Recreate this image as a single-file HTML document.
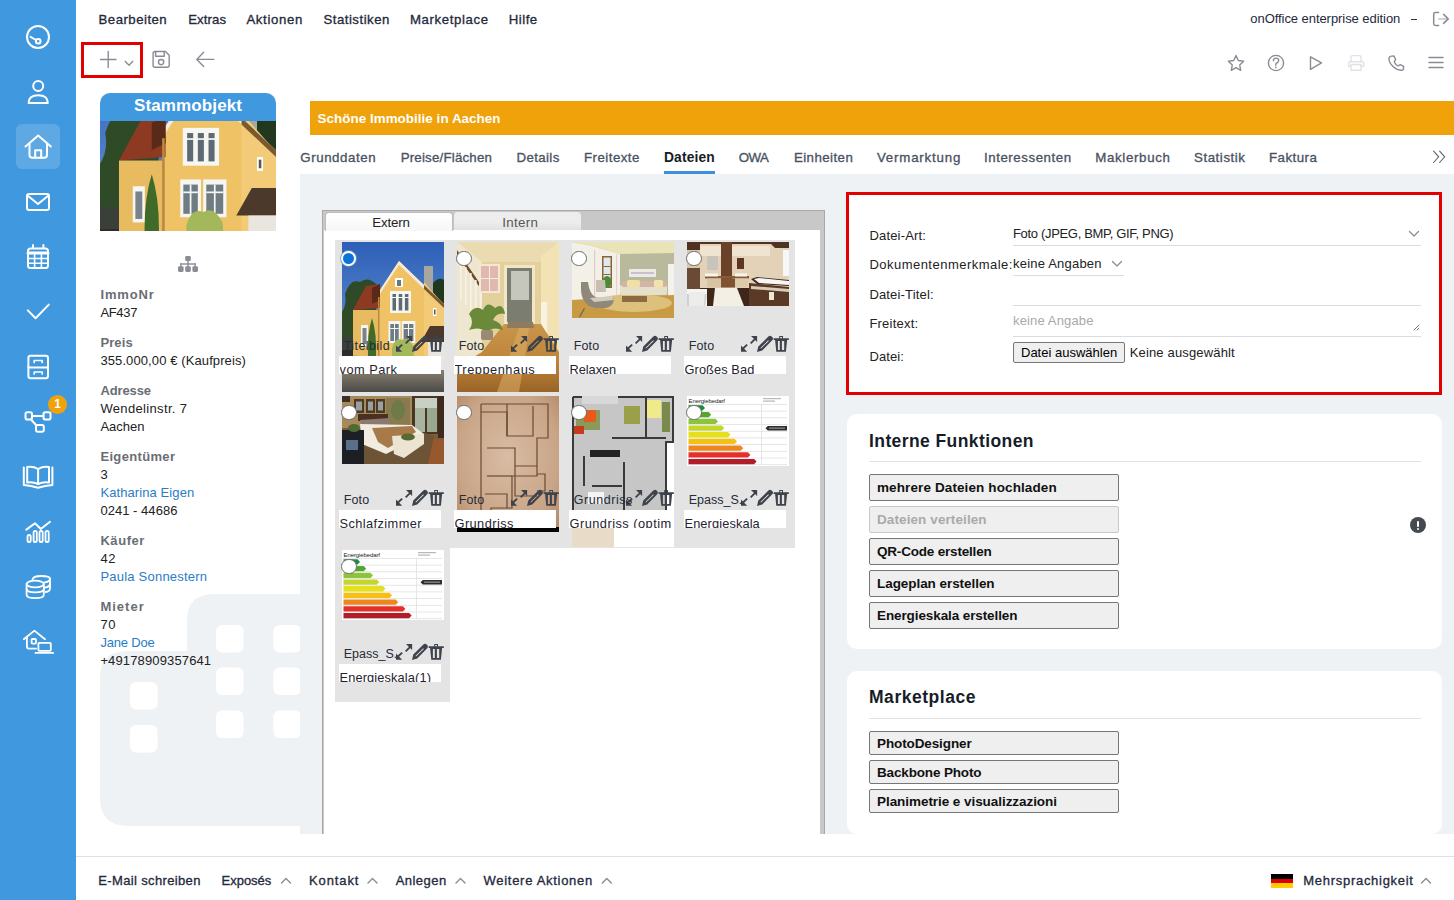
<!DOCTYPE html>
<html><head><meta charset="utf-8">
<style>
*{box-sizing:border-box;margin:0;padding:0}
html,body{width:1454px;height:900px;overflow:hidden;background:#fff;font-family:"Liberation Sans",sans-serif;color:#1f2330}
.a{position:absolute}
.t{position:absolute;white-space:nowrap;line-height:1}
</style></head>
<body>
<svg width="0" height="0" style="position:absolute">
<defs>
<linearGradient id="sky" x1="0" y1="0" x2="0" y2="1"><stop offset="0" stop-color="#2d5fb6"/><stop offset="0.6" stop-color="#5b8ad0"/><stop offset="1" stop-color="#8fb2dc"/></linearGradient>
<linearGradient id="road" x1="0" y1="0" x2="0" y2="1"><stop offset="0" stop-color="#8a8070"/><stop offset="1" stop-color="#4a4a48"/></linearGradient>
<g id="house">
<rect x="0" y="0" width="102" height="150" fill="url(#sky)"/>
<path d="M3 52 Q8 36 18 40 Q26 34 34 42 L34 110 L0 110 L0 70 Q5 62 3 52 Z" fill="#2f4a26"/><path d="M0 95 H12 V132 H0 Z" fill="#3a3f3a"/>
<path d="M90 42 Q97 34 102 38 L102 70 L90 70 Z" fill="#22381e"/>
<rect x="82" y="24" width="9" height="34" fill="#a9a6a0"/>
<path d="M36 51 L57 19 L102 63 L102 132 L36 132 Z" fill="#f0c266"/>
<path d="M82 40 L102 63 L102 132 L82 132 Z" fill="#f3cb78"/>
<path d="M57 19 L102 62 L102 66 L57 23 L36 55 L36 51 Z" fill="#f4ead6"/>
<path d="M82 43 L102 62 L102 66 L82 47 Z" fill="#7a5a2a"/>
<path d="M11 68 L24 44 L38 42 L38 66 Z" fill="#8e3a22"/>
<path d="M30 46 L38 42 L38 58 L30 62 Z" fill="#5a2a18"/>
<rect x="11" y="68" width="26" height="64" fill="#e9bb60"/>
<rect x="36" y="55" width="1.5" height="77" fill="#b88a40"/>
<rect x="53" y="36" width="8" height="9" fill="#fff"/><rect x="55" y="38" width="4" height="6" fill="#6a7680"/>
<rect x="48" y="49" width="21" height="22" fill="#f6f6f2"/>
<rect x="50.5" y="52" width="3.5" height="16.5" fill="#5d6a74"/><rect x="56.7" y="52" width="3.5" height="16.5" fill="#5d6a74"/><rect x="62.9" y="52" width="3.5" height="16.5" fill="#5d6a74"/>
<rect x="50" y="55" width="17" height="1" fill="#f6f6f2"/>
<rect x="46.5" y="79" width="12" height="22" fill="#f6f6f2"/><rect x="48.3" y="82" width="8.4" height="17" fill="#707c84"/><rect x="52" y="82" width="1" height="17" fill="#f6f6f2"/><rect x="48.3" y="86" width="8.4" height="1" fill="#f6f6f2"/>
<rect x="59.8" y="79" width="13.5" height="22" fill="#f6f6f2"/><rect x="61.6" y="82" width="9.8" height="17" fill="#707c84"/><rect x="66" y="82" width="1" height="17" fill="#f6f6f2"/><rect x="61.6" y="86" width="9.8" height="1" fill="#f6f6f2"/>
<rect x="19" y="83" width="7" height="21" fill="#f6f6f2"/><rect x="20.5" y="86" width="4" height="16" fill="#7a838a"/>
<rect x="91" y="66" width="3.5" height="8" fill="#fff"/><rect x="92" y="67.5" width="1.5" height="5" fill="#555"/>
<path d="M30 76 Q25 92 26 115 L34 115 Q35 92 30 76 Z" fill="#3f6a2a"/>
<path d="M50 106 Q53 95 60 98 Q66 94 71 104 L72 115 L50 115 Z" fill="#a2b85a"/>
<path d="M79 100 L88 84 L102 84 L102 100 Z" fill="#4b3a2c"/>
<rect x="86" y="100" width="16" height="32" fill="#e9e6df"/>
<path d="M0 108 L11 108 L11 132 L0 132 Z" fill="#2c2c2a"/>
<path d="M4 118 Q12 110 22 116 L22 132 L4 132 Z" fill="#8aa24a"/>
<rect x="0" y="128" width="102" height="22" fill="url(#road)"/>
<rect x="0" y="128" width="40" height="4" fill="#c9a560"/>
</g>
</defs></svg>
<div class="a" style="left:0;top:0;width:76px;height:900px;background:#4098df"></div>
<div class="a" style="left:16px;top:124px;width:44px;height:45px;border-radius:6px;background:rgba(255,255,255,0.16)"></div>
<svg class="a" style="left:0;top:0" width="76" height="700" viewBox="0 0 76 700" fill="none" stroke="#fff" stroke-width="2" stroke-linecap="round" stroke-linejoin="round">
<!-- gauge -->
<circle cx="38" cy="37" r="11"/>
<line x1="30.5" y1="36.8" x2="36" y2="40"/>
<circle cx="38.2" cy="41.2" r="2.3"/>
<!-- person -->
<circle cx="38.2" cy="86" r="5"/>
<path d="M28.6 103 C28.6 97 33 95.2 38.2 95.2 C43.4 95.2 47.8 97 47.8 103 Z"/>
<!-- home -->
<path d="M25.5 146.5 L38.2 135.6 L50.8 146.5"/>
<path d="M29.5 144 V155 Q29.5 157.8 32.3 157.8 H44.2 Q47 157.8 47 155 V144"/>
<path d="M35.2 157.8 V150.2 H41.2 V157.8"/>
<!-- mail -->
<rect x="27" y="194" width="22" height="16" rx="2"/>
<path d="M27.5 195.5 L38 204 L48.5 195.5"/>
<!-- calendar -->
<rect x="28" y="248.5" width="20" height="19.5" rx="2.5"/>
<line x1="28" y1="253" x2="48" y2="253" stroke-width="3"/>
<line x1="33" y1="245" x2="33" y2="248"/>
<line x1="43.4" y1="245" x2="43.4" y2="248"/>
<line x1="28" y1="258.5" x2="48" y2="258.5" stroke-width="1.6"/>
<line x1="28" y1="263.2" x2="48" y2="263.2" stroke-width="1.6"/>
<line x1="34.6" y1="253" x2="34.6" y2="268" stroke-width="1.6"/>
<line x1="41.4" y1="253" x2="41.4" y2="268" stroke-width="1.6"/>
<!-- check -->
<path d="M27.8 310.4 L35.6 318.2 L48.8 304.6"/>
<!-- cabinet -->
<rect x="28.4" y="355.8" width="19.6" height="22.4" rx="2.2"/>
<line x1="28.4" y1="367.5" x2="48" y2="367.5"/>
<path d="M34.2 362.5 V360.5 H42.2 V362.5" stroke-width="1.7"/>
<path d="M34.2 374 V372 H42.2 V374" stroke-width="1.7"/>
<!-- network -->
<rect x="25.5" y="412.3" width="6.5" height="7.2" rx="1.8"/>
<rect x="43.5" y="412.3" width="7" height="7.2" rx="1.8"/>
<rect x="36" y="425" width="7.8" height="6.8" rx="1.8"/>
<line x1="32" y1="415.9" x2="43.5" y2="415.9"/>
<line x1="31" y1="419.5" x2="36.5" y2="425.5"/>
<!-- book -->
<path d="M27.2 467 Q33 466 38.1 469 Q43.2 466 49 467 V482.5 Q43.2 481.5 38.1 484 Q33 481.5 27.2 482.5 Z"/>
<line x1="38.1" y1="469" x2="38.1" y2="484"/>
<path d="M23.8 467.5 V485 Q31 485.5 38.1 487.8 Q45.2 485.5 52.4 485 V467.5"/>
<!-- chart -->
<path d="M26.3 529.6 L35 523.3 L40.8 529 L50 521.8"/>
<rect x="27.5" y="535" width="3.2" height="7" rx="1.6" stroke-width="1.8"/>
<rect x="33.6" y="530.8" width="3.2" height="11.2" rx="1.6" stroke-width="1.8"/>
<rect x="39.5" y="530.8" width="3.2" height="11.2" rx="1.6" stroke-width="1.8"/>
<rect x="45.5" y="530.8" width="3.2" height="11.2" rx="1.6" stroke-width="1.8"/>
<!-- coins -->
<path d="M32.5 579.5 Q33 576 41.3 576 Q50 576 50 578.8 V588.5 Q50 591.6 45.5 592" stroke-width="1.8"/>
<path d="M44.5 582.3 Q49.5 582 50 579" stroke-width="1.8"/>
<path d="M45 587.5 Q49.5 587 50 584" stroke-width="1.8"/>
<ellipse cx="35.2" cy="584" rx="8.6" ry="3.3" stroke-width="1.8"/>
<path d="M26.6 584 V594.8 Q26.6 598.2 35.2 598.2 Q43.8 598.2 43.8 594.8 V584" stroke-width="1.8"/>
<path d="M26.6 589 Q26.6 592.3 35.2 592.3 Q43.8 592.3 43.8 589" stroke-width="1.8"/>
<path d="M26.6 593.5 Q26.6 596.8 35.2 596.8" stroke-width="0"/>
<!-- house laptop -->
<path d="M23.8 639.3 L34.4 630.6 L45 639.3" stroke-width="1.8"/>
<path d="M26.9 637 V646.5 Q26.9 648.6 29 648.6 H36" stroke-width="1.8"/>
<rect x="31.6" y="639" width="4.4" height="4.6" rx="0.8" stroke-width="1.8"/>
<rect x="38.4" y="642.8" width="12.4" height="8" rx="0.8" stroke-width="1.8"/>
<line x1="35.4" y1="652.9" x2="53.2" y2="652.9" stroke-width="1.8"/>
</svg>
<div class="a" style="left:48px;top:394.5px;width:19px;height:19px;border-radius:50%;background:#f0a20a;color:#fff;font-size:12px;font-weight:bold;text-align:center;line-height:19px">1</div>
<!-- toolbar icons -->
<svg class="a" style="left:0;top:0" width="1454" height="90" viewBox="0 0 1454 90" fill="none" stroke="#8a8c94" stroke-width="1.4" stroke-linecap="round" stroke-linejoin="round">
<line x1="100.5" y1="59.5" x2="116" y2="59.5"/>
<line x1="108.2" y1="51.5" x2="108.2" y2="67.5"/>
<path d="M125.2 61.2 L129 65.2 L132.8 61.2" stroke-width="1.3"/>
<path d="M153.1 53.5 Q153.1 51.5 155.1 51.5 H165.5 L169.2 55.3 V65.3 Q169.2 67.3 167.2 67.3 H155.1 Q153.1 67.3 153.1 65.3 Z"/>
<path d="M155.6 51.5 V56.3 H164.2 V51.5"/>
<circle cx="161.1" cy="62.1" r="2.6"/>
<path d="M203.6 52.3 L196.8 59.4 L203.6 66.5 M196.8 59.4 H213.8"/>
<!-- right icons -->
<path d="M1236 55.5 L1238.3 60.5 L1243.7 61.2 L1239.7 64.9 L1240.7 70.3 L1236 67.6 L1231.3 70.3 L1232.3 64.9 L1228.3 61.2 L1233.7 60.5 Z"/>
<circle cx="1276" cy="63" r="7.6"/>
<path d="M1273.4 60.8 Q1273.4 58.1 1276 58.1 Q1278.7 58.1 1278.7 60.6 Q1278.7 62.2 1276.8 63 Q1275.7 63.5 1275.8 65.2"/>
<circle cx="1275.8" cy="67.4" r="0.35" stroke-width="1.2"/>
<path d="M1310.5 56.8 L1321.5 62.9 L1310.5 69.4 Z"/>
<g stroke="#dfe3e8">
<path d="M1351 61.8 V57 Q1351 55.6 1352.4 55.6 H1359.6 Q1361 55.6 1361 57 V61.8"/>
<path d="M1351 66.5 H1348.6 V62.8 Q1348.6 61.8 1349.6 61.8 H1362.6 Q1363.6 61.8 1363.6 62.8 V66.5 H1361"/>
<rect x="1351" y="64.5" width="10" height="5.8"/>
</g>
<path d="M1391.6 56.1 L1394 56 L1395.6 59.6 L1394.2 61.8 Q1395.5 64.7 1398 66 L1400.2 64.6 L1403.6 66.4 L1403.5 69.1 Q1402.8 70.5 1400.8 70.3 Q1394.5 69.4 1390.6 63.6 Q1388.3 59.7 1389.2 57.6 Q1389.8 56.3 1391.6 56.1 Z"/>
<line x1="1429" y1="57.4" x2="1443" y2="57.4" stroke-width="1.5"/>
<line x1="1429" y1="62.5" x2="1443" y2="62.5" stroke-width="1.5"/>
<line x1="1429" y1="67.5" x2="1443" y2="67.5" stroke-width="1.5"/>
<!-- logout -->
<path d="M1438.6 12.5 H1435.3 Q1433.7 12.5 1433.7 14.1 V23.8 Q1433.7 25.4 1435.3 25.4 H1438.6" stroke-width="1.5"/>
<line x1="1438.6" y1="18.9" x2="1448" y2="18.9" stroke="#c4c6cb" stroke-width="1.5"/>
<path d="M1443.6 14.4 L1448.2 18.9 L1443.6 23.4" stroke-width="1.5"/>
</svg>
<!-- red box toolbar -->
<div class="a" style="left:81px;top:42px;width:62px;height:36px;border:3px solid #e20000"></div>
<div class="a" style="left:1411px;top:18.5px;width:6px;height:1.3px;background:#333"></div>

<!-- Stammobjekt card -->
<div class="a" style="left:100px;top:93px;width:176px;height:28px;background:#4098df;border-radius:10px 10px 0 0"></div>
<svg class="a" style="left:100px;top:121px" width="176" height="110" viewBox="0 45 102 64" preserveAspectRatio="none"><use href="#house"/></svg>
<!-- hierarchy icon -->
<svg class="a" style="left:176px;top:255px" width="24" height="18" viewBox="0 0 24 18" fill="#8a8d93">
<rect x="9.2" y="1" width="5.6" height="5" rx="1.3"/>
<rect x="11.3" y="5.5" width="1.4" height="3.5"/>
<rect x="4.2" y="8.3" width="15.6" height="1.4"/>
<rect x="4.2" y="8.3" width="1.4" height="3.5"/>
<rect x="18.4" y="8.3" width="1.4" height="3.5"/>
<rect x="11.3" y="8.3" width="1.4" height="3.5"/>
<rect x="2" y="11.3" width="5.6" height="5.6" rx="1.3"/>
<rect x="9.2" y="11.3" width="5.6" height="5.6" rx="1.3"/>
<rect x="16.4" y="11.3" width="5.6" height="5.6" rx="1.3"/>
</svg>

<!-- building illustration -->
<svg class="a" style="left:100px;top:594px" width="200" height="232" viewBox="0 0 200 232">
<path d="M87 27 Q87 0 114 0 H200 V232 H28 Q0 232 0 204 V84 Q0 57 27 57 H87 Z" fill="#eff2f5"/>
<g fill="#fff">
<rect x="30" y="88" width="27.5" height="27.5" rx="6"/>
<rect x="30" y="131" width="27.5" height="27.5" rx="6"/>
<rect x="116" y="31" width="27.5" height="27.5" rx="6"/>
<rect x="116" y="73.5" width="27.5" height="27.5" rx="6"/>
<rect x="116" y="116.5" width="27.5" height="27.5" rx="6"/>
<rect x="173.5" y="31" width="27.5" height="27.5" rx="6"/>
<rect x="173.5" y="73.5" width="27.5" height="27.5" rx="6"/>
<rect x="173.5" y="116.5" width="27.5" height="27.5" rx="6"/>
</g>
</svg>

<!-- orange bar -->
<div class="a" style="left:310px;top:101px;width:1144px;height:34px;background:#f0a20a"></div>

<!-- tabs underline & >> -->
<div class="a" style="left:664px;top:171px;width:51px;height:3px;background:#3b8fdc"></div>
<svg class="a" style="left:1430px;top:149px" width="20" height="16" viewBox="0 0 20 16" fill="none" stroke="#5a5f6b" stroke-width="1.05" stroke-linecap="round" stroke-linejoin="miter">
<path d="M3.6 2.1 L8.7 7.8 L3.6 13.5"/><path d="M9.6 2.1 L14.7 7.8 L9.6 13.5"/>
</svg>

<!-- content gray -->
<div class="a" style="left:300px;top:174px;width:1154px;height:660px;background:#eff2f5"></div>

<!-- file panel -->
<div class="a" style="left:322px;top:210px;width:503px;height:624px;background:#c8c8c8;border:1px solid #a9a9a9;border-bottom:none"></div>
<div class="a" style="left:324px;top:230px;width:496px;height:604px;background:#fff"></div>
<div class="a" style="left:324.5px;top:212px;width:128px;height:19px;background:linear-gradient(#fff,#f7f7f7);border:1px solid #bdbdbd;border-bottom:none;border-radius:4px 4px 0 0"></div>
<div class="a" style="left:453px;top:211.5px;width:128px;height:18.5px;background:linear-gradient(#ededed 0,#ededed 55%,#e2e2e2 100%);border-left:1px solid #c4c4c4;border-radius:4px 4px 0 0"></div>

<!-- grid bg -->
<div class="a" style="left:335px;top:240px;width:460px;height:308px;background:#e4e4e4"></div>
<div class="a" style="left:335px;top:547px;width:115px;height:155px;background:#e4e4e4"></div>

<!-- right form box -->
<div class="a" style="left:846px;top:192px;width:596px;height:203px;background:#fff;border:3px solid #e20000"></div>
<div class="a" style="left:1013px;top:245px;width:408px;height:1px;background:#d8dde3"></div>
<div class="a" style="left:1013px;top:275px;width:111px;height:1px;background:#d8dde3"></div>
<div class="a" style="left:1013px;top:305px;width:408px;height:1px;background:#d8dde3"></div>
<div class="a" style="left:1013px;top:336px;width:408px;height:1px;background:#d8dde3"></div>
<svg class="a" style="left:1000px;top:220px" width="440" height="120" viewBox="1000 220 440 120" fill="none" stroke="#8a8c94" stroke-width="1.3" stroke-linecap="round" stroke-linejoin="round">
<path d="M1409.5 231.5 L1414 236 L1418.5 231.5"/>
<path d="M1112.5 261.5 L1117 266 L1121.5 261.5"/>
<path d="M1414 330 L1419 325 M1417 330 L1419 328" stroke="#666" stroke-width="0.9"/>
</svg>
<div class="a" style="left:1013px;top:342px;width:112px;height:21px;background:#efefef;border:1px solid #767676;border-radius:2px"></div>
<div class="t" style="left:1021px;top:346px;font-size:13px;color:#000">Datei auswählen</div>

<!-- Interne Funktionen card -->
<div class="a" style="left:847px;top:414px;width:595px;height:235px;background:#fff;border-radius:10px"></div>
<div class="a" style="left:869px;top:461px;width:552px;height:1px;background:#dfe3e8"></div>
<div class="a" style="left:869px;top:474px;width:250px;height:27px;background:#efefef;border:1px solid #767676;border-radius:2px"></div>
<div class="a" style="left:869px;top:506px;width:250px;height:27px;background:#efefef;border:1px solid #c9c9c9;border-radius:2px"></div>
<div class="a" style="left:869px;top:538px;width:250px;height:27px;background:#efefef;border:1px solid #767676;border-radius:2px"></div>
<div class="a" style="left:869px;top:570px;width:250px;height:27px;background:#efefef;border:1px solid #767676;border-radius:2px"></div>
<div class="a" style="left:869px;top:602px;width:250px;height:27px;background:#efefef;border:1px solid #767676;border-radius:2px"></div>
<div class="a" style="left:1410px;top:517px;width:16px;height:16px;border-radius:50%;background:#454952"></div>
<div class="a" style="left:1417px;top:520.5px;width:2px;height:6px;background:#fff;border-radius:1px"></div>
<div class="a" style="left:1417px;top:528px;width:2px;height:2px;background:#fff;border-radius:1px"></div>

<!-- Marketplace card -->
<div class="a" style="left:847px;top:671px;width:595px;height:162.5px;background:#fff;border-radius:10px"></div>
<div class="a" style="left:869px;top:718px;width:552px;height:1px;background:#dfe3e8"></div>
<div class="a" style="left:869px;top:731px;width:250px;height:24px;background:#efefef;border:1px solid #767676;border-radius:2px"></div>
<div class="a" style="left:869px;top:760px;width:250px;height:24px;background:#efefef;border:1px solid #767676;border-radius:2px"></div>
<div class="a" style="left:869px;top:789px;width:250px;height:24px;background:#efefef;border:1px solid #767676;border-radius:2px"></div>

<!-- footer -->
<div class="a" style="left:76px;top:856px;width:1378px;height:1px;background:#dde1e6"></div>
<svg class="a" style="left:0;top:870px" width="1454" height="30" viewBox="0 870 1454 30" fill="none" stroke="#8a8c94" stroke-width="1.4" stroke-linecap="round" stroke-linejoin="round">
<path d="M281.5 883 L286 878.5 L290.5 883"/>
<path d="M368 883 L372.5 878.5 L377 883"/>
<path d="M456 883 L460.5 878.5 L465 883"/>
<path d="M602.3 883 L606.8 878.5 L611.3 883"/>
<path d="M1421.5 883 L1426 878.5 L1430.5 883"/>
</svg>
<div class="a" style="left:1271px;top:874px;width:22px;height:4.6px;background:#000"></div>
<div class="a" style="left:1271px;top:878.6px;width:22px;height:4.6px;background:#dd0000"></div>
<div class="a" style="left:1271px;top:883.2px;width:22px;height:4.6px;background:#ffce00"></div>
<!-- photo 1 house -->
<svg class="a" style="left:342px;top:242px" width="102" height="150" viewBox="0 0 102 150"><use href="#house"/></svg>
<!-- photo 2 Treppenhaus -->
<svg class="a" style="left:457px;top:242px" width="102" height="150" viewBox="0 0 102 150">
<defs><linearGradient id="tfl" x1="0" y1="0" x2="0" y2="1"><stop offset="0" stop-color="#c9964c"/><stop offset="0.55" stop-color="#bd8438"/><stop offset="1" stop-color="#9a6428"/></linearGradient></defs>
<rect width="102" height="150" fill="#e4d09a"/>
<rect width="102" height="20" fill="#eadcb0"/>
<path d="M0 0 L25 20 L25 110 L0 125 Z" fill="#efe6cf"/>
<path d="M0 8 L26 46 L26 50 L0 13 Z" fill="#6a4a2a"/>
<g fill="#f7f2e6"><rect x="3" y="18" width="1.6" height="40"/><rect x="8" y="25" width="1.6" height="38"/><rect x="13" y="31" width="1.6" height="36"/><rect x="18" y="38" width="1.6" height="34"/><rect x="23" y="44" width="1.6" height="32"/></g>
<rect x="22" y="22" width="21" height="29" fill="#f2e8d4"/><rect x="24" y="24" width="17" height="25" fill="#e0b8b0"/><rect x="32" y="24" width="1" height="25" fill="#f4ede0"/><rect x="24" y="36" width="17" height="1" fill="#f4ede0"/>
<rect x="47" y="23" width="31" height="59" fill="#f1e6c8"/>
<rect x="50" y="26" width="25" height="54" fill="#7b7d70"/>
<rect x="54" y="29" width="18" height="29" fill="#c6c7bc"/>
<path d="M84 14 L102 0 L102 132 L84 108 Z" fill="#f2e2b4"/>
<rect x="84" y="60" width="6" height="34" fill="#f8f2e2"/>
<path d="M0 125 L25 110 L47 82 L84 82 L102 110 L102 150 L0 150 Z" fill="url(#tfl)"/>
<path d="M40 150 Q52 115 62 86 L72 86 Q68 118 62 150 Z" fill="#dcae68" opacity="0.55"/>
<path d="M51 80 L76 80 L77 86 L50 86 Z" fill="#8e7c5c"/>
<path d="M12 72 Q18 62 26 68 Q30 58 38 66 Q46 60 48 72 Q40 70 36 78 Q44 80 46 88 Q36 84 30 90 Q22 84 12 88 Q18 80 12 72 Z" fill="#6a8a3a"/>
<rect x="24" y="88" width="12" height="10" rx="2" fill="#9a8a72"/>
</svg>
<!-- photo 3 Relaxen -->
<svg class="a" style="left:572px;top:242px" width="102" height="76" viewBox="0 0 102 76">
<rect width="102" height="76" fill="#b9b99d"/>
<path d="M0 0 H102 V11 L48 12 L16 3 Z" fill="#e9e3b8"/>
<path d="M0 0 L16 3 L48 12 V56 L0 60 Z" fill="#f3f0e8"/>
<rect x="30" y="14" width="10" height="32" fill="#8a6438"/><rect x="31.5" y="15.5" width="7" height="29" fill="#dfe8ee"/><rect x="31.5" y="24" width="7" height="1" fill="#8a6438"/><rect x="31.5" y="32" width="7" height="1" fill="#8a6438"/>
<ellipse cx="35" cy="40" rx="4.5" ry="6" fill="#4c8a38"/>
<rect x="22" y="8" width="1.2" height="48" fill="#e6c8c8"/><rect x="44" y="12" width="1.2" height="44" fill="#ead0d0"/>
<rect x="57" y="27" width="27" height="8" fill="#eceae4"/><rect x="59" y="30" width="23" height="2" fill="#c8c0d0"/>
<rect x="96" y="22" width="6" height="32" fill="#f4f2ec"/>
<path d="M0 58 L48 55 L102 53 V76 H0 Z" fill="#c99a44"/>
<ellipse cx="62" cy="61" rx="38" ry="9" fill="#dcc07c"/>
<rect x="48" y="43" width="47" height="10" rx="2" fill="#e6dfca"/>
<rect x="50" y="39" width="44" height="6" rx="1" fill="#d6b4a4"/>
<rect x="55" y="38" width="13" height="7" rx="1.5" fill="#f0e0a4"/><rect x="82" y="38" width="9" height="7" rx="1.5" fill="#f2e4a8"/>
<rect x="50" y="54" width="25" height="6" fill="#8c6a44"/>
<path d="M9 40 L16 40 Q18 56 28 56 L42 56 Q42 64 34 66 L24 66 Q10 64 9 48 Z" fill="#8e877a"/>
<path d="M18 56 L40 54 L42 58 L22 60 Z" fill="#d2ccbc"/>
<path d="M24 38 L33 38 L34 50 L24 50 Z" fill="#c6c0b0"/>
<rect x="12" y="66" width="1.2" height="10" fill="#6a6258" transform="rotate(30 12 66)"/>
</svg>
<!-- photo 4 Bad -->
<svg class="a" style="left:687px;top:242px" width="102" height="64" viewBox="0 0 102 64">
<rect width="102" height="64" fill="#e3d2b8"/>
<rect x="13" y="4" width="70" height="10" fill="#efe4d0"/>
<path d="M0 0 H102 V6 L88 6 L84 2 H13 V8 H0 Z" fill="#4e3322"/>
<rect x="0" y="8" width="13" height="18" fill="#d9c6a8"/>
<rect x="0" y="26" width="13" height="24" fill="#6a4a34"/>
<rect x="34" y="0" width="11" height="37" fill="#6a4229"/>
<rect x="20" y="14" width="11" height="14" fill="#c9c4bb"/>
<rect x="50" y="16" width="7" height="11" fill="#5e3424"/>
<rect x="96" y="8" width="6" height="26" fill="#f6f7f8"/>
<rect x="18" y="34" width="44" height="2.5" fill="#8a5a36"/>
<rect x="18" y="31.5" width="13" height="3" fill="#f7f5f0"/><rect x="48" y="31.5" width="12" height="3" fill="#f7f5f0"/>
<rect x="20" y="36.5" width="14" height="9" fill="#d8c4a2"/><rect x="34" y="36.5" width="14" height="9" fill="#7e5232"/><rect x="48" y="36.5" width="13" height="9" fill="#dccaa8"/>
<path d="M64 37 L70 35 L102 38 V44 L70 42 Z" fill="#3a2a20"/>
<path d="M67 37 L72 36 L102 39 V43 L72 41 Z" fill="#f8f6f2"/>
<path d="M62 41 L102 45 V64 H62 Z" fill="#5a3a26"/><path d="M64 44 L102 47 V50 L64 47 Z" fill="#d8ccb8"/>
<path d="M13 46 L62 46 L62 64 L13 64 Z" fill="#3e2618"/>
<path d="M28 46 L50 46 L57 64 L26 64 Z" fill="#f4efe4"/>
<path d="M0 47 L20 47 L20 64 L0 64 Z" fill="#f4f4f2"/><path d="M0 52 L20 52 L18 64 L0 64 Z" fill="#cfd0d0"/><path d="M2 50 L18 50 L17 64 L2 64 Z" fill="#ececea"/>
<rect x="82" y="50" width="5" height="8" fill="#efe8d0"/>
</svg>
<!-- photo 5 Schlafzimmer -->
<svg class="a" style="left:342px;top:396px" width="102" height="68" viewBox="0 0 102 68">
<rect width="102" height="68" fill="#7a5e3c"/>
<rect width="70" height="32" fill="#a8895a"/>
<rect x="0" y="0" width="8" height="6" fill="#3a3028"/>
<g fill="#4a3a26"><rect x="12" y="3" width="10" height="14"/><rect x="24" y="3" width="9" height="14"/><rect x="34" y="3" width="9" height="14"/></g>
<g fill="#9aa0a0"><rect x="14" y="5.5" width="6" height="9"/><rect x="26" y="5.5" width="5" height="9"/><rect x="36" y="5.5" width="5" height="9"/></g>
<rect x="44" y="2" width="24" height="28" fill="#8a7a50"/>
<ellipse cx="56" cy="14" rx="7" ry="10" fill="#6e7a48"/>
<rect x="70" y="0" width="28" height="38" fill="#4a3422"/>
<rect x="73" y="2" width="10" height="34" fill="#a8b4a0"/><rect x="85" y="2" width="10" height="34" fill="#9aa890"/>
<rect x="73" y="2" width="22" height="10" fill="#c8d0c4"/>
<rect x="96" y="0" width="6" height="42" fill="#3e2a1c"/>
<rect x="16" y="18" width="30" height="7" fill="#4a3020"/>
<path d="M18 24 L48 22 L48 30 L20 32 Z" fill="#8a7a70"/>
<path d="M86 42 L102 44 V68 H80 Z" fill="#98582e"/>
<path d="M0 44 L80 36 L92 40 L86 68 L0 68 Z" fill="#6e5436"/>
<path d="M18 28 L70 29 L82 38 L60 50 L44 58 L20 48 Z" fill="#f2ece0"/>
<path d="M30 32 L70 30 L74 36 L46 52 L36 46 Z" fill="#a67a4a"/>
<path d="M50 40 L82 38 L82 48 L62 62 L52 58 Z" fill="#ebe4d2"/>
<ellipse cx="66" cy="41" rx="7" ry="3.5" fill="#586a34"/>
<rect x="0" y="34" width="22" height="34" fill="#1c2024"/>
<rect x="4" y="44" width="12" height="10" fill="#5a7088"/>
<ellipse cx="12" cy="32" rx="6" ry="4" fill="#4e6a34"/>
</svg>
<!-- photo 6 Grundriss -->
<svg class="a" style="left:457px;top:396px" width="102" height="136" viewBox="0 0 102 136">
<defs><radialGradient id="pap" cx="0.5" cy="0.45" r="0.7"><stop offset="0" stop-color="#d8bca4"/><stop offset="0.7" stop-color="#c9a587"/><stop offset="1" stop-color="#b48a68"/></radialGradient></defs><rect width="102" height="136" fill="url(#pap)"/>
<g fill="none" stroke="#6a4a34" stroke-width="1.2">
<path d="M24 8 H91 V42 H80 V80 H55 V112 H34 V130"/>
<path d="M24 8 V128"/>
<path d="M24 16 H50 V40"/>
<path d="M50 8 V40 H76 V10"/>
<path d="M30 52 H58 V70 H80"/>
<path d="M58 70 V100 H80"/>
<path d="M30 80 H55"/>
<path d="M28 98 H50 V112"/>
<path d="M80 78 H88 V95 H80"/>
</g>
<rect x="0" y="131" width="102" height="5" fill="#050505"/>
</svg>
<!-- photo 7 Grundriss optim -->
<svg class="a" style="left:572px;top:396px" width="102" height="151" viewBox="0 0 102 151">
<rect width="102" height="151" fill="#fff"/>
<rect x="0" y="0" width="102" height="131" fill="#c6c6c6"/>
<rect x="94" y="46" width="8" height="85" fill="#fff"/>
<g fill="none" stroke="#3a3a3a" stroke-width="2">
<path d="M1 1 H101 V46 H94 V131"/>
<path d="M1 1 V131"/>
<path d="M74 1 V42 H94"/>
<path d="M40 42 H74"/>
<path d="M12 60 V90"/>
<path d="M52 66 V120 H94"/>
<path d="M20 90 H50"/>
</g>
<rect x="18" y="54" width="30" height="7" fill="#222"/>
<rect x="4" y="14" width="24" height="20" fill="#8a9a5a"/>
<rect x="12" y="14" width="12" height="12" fill="#e85a1a"/>
<rect x="2" y="30" width="10" height="8" fill="#c83a20"/>
<rect x="52" y="10" width="16" height="18" fill="#9aa04a"/>
<rect x="75" y="4" width="14" height="18" fill="#f0ea8a"/>
<rect x="90" y="6" width="8" height="30" fill="#7a8a4a"/>
<rect x="16" y="96" width="16" height="12" fill="#f4f4f4"/>
<rect x="0" y="125" width="42" height="26" fill="#e8dcc8"/>
<rect x="10" y="0" width="36" height="8" fill="#d8d8d8"/>
</svg>
<!-- photo 8 Energieskala -->
<svg class="a" style="left:687px;top:396px" width="102" height="70" viewBox="0 0 102 70"><g id="eskala">
<rect width="102" height="70" fill="#fff"/>
<text x="1.5" y="6.6" font-family="Liberation Sans" font-size="6" fill="#222" letter-spacing="-0.1">Energiebedarf</text>
<rect x="76" y="2" width="18" height="1.2" fill="#888" opacity="0.6"/><rect x="76" y="4.5" width="12" height="1.2" fill="#888" opacity="0.6"/>
<g fill="#e0e0e0">
<rect x="1" y="8" width="99" height="0.8"/><rect x="1" y="14.7" width="99" height="0.8"/><rect x="1" y="21.4" width="99" height="0.8"/><rect x="1" y="28.1" width="99" height="0.8"/><rect x="1" y="34.8" width="99" height="0.8"/><rect x="1" y="41.5" width="99" height="0.8"/><rect x="1" y="48.2" width="99" height="0.8"/><rect x="1" y="54.9" width="99" height="0.8"/><rect x="1" y="61.6" width="99" height="0.8"/><rect x="1" y="68.3" width="99" height="0.8"/>
<rect x="74" y="8" width="0.8" height="61"/>
</g>
<path d="M1.5 9.3 H15.5 L18 12 L15.5 14.6 H1.5 Z" fill="#1c8c3c"/>
<path d="M1.5 16 H21.7 L24.2 18.7 L21.7 21.3 H1.5 Z" fill="#56a62c"/>
<path d="M1.5 22.7 H28.5 L31 25.4 L28.5 28 H1.5 Z" fill="#8cc43e"/>
<path d="M1.5 29.4 H34.7 L37.2 32.1 L34.7 34.7 H1.5 Z" fill="#c4d62a"/>
<path d="M1.5 36.1 H41 L43.5 38.8 L41 41.4 H1.5 Z" fill="#e6e01c"/>
<path d="M1.5 42.8 H47.5 L50 45.5 L47.5 48.1 H1.5 Z" fill="#f6bf14"/>
<path d="M1.5 49.5 H53.7 L56.2 52.2 L53.7 54.8 H1.5 Z" fill="#ee861c"/>
<path d="M1.5 56.2 H60.9 L63.4 58.9 L60.9 61.5 H1.5 Z" fill="#e4302a"/>
<path d="M1.5 62.9 H67.1 L69.6 65.6 L67.1 68.2 H1.5 Z" fill="#b01e2a"/>
<path d="M78.5 32.2 L80.8 30 H100 V34.4 H80.8 Z" fill="#2e2e2e"/><rect x="82" y="31.6" width="16" height="1" fill="#aaa"/>
</g></svg>
<!-- photo 9 Energieskala(1) -->
<svg class="a" style="left:342px;top:550px" width="102" height="70" viewBox="0 0 102 70"><use href="#eskala"/></svg>

<!-- radios -->
<div class="a" style="left:341px;top:250.5px;width:15px;height:15px;border-radius:50%;background:#0a74d8;border:2px solid #fff;box-shadow:0 0 0 0.8px #7a9ac0"></div>
<div class="a" style="left:456px;top:250.5px;width:15.5px;height:15.5px;border-radius:50%;background:#fff;border:1px solid #6c6c6c"></div>
<div class="a" style="left:571px;top:250.5px;width:15.5px;height:15.5px;border-radius:50%;background:#fff;border:1px solid #6c6c6c"></div>
<div class="a" style="left:686px;top:250.5px;width:15.5px;height:15.5px;border-radius:50%;background:#fff;border:1px solid #6c6c6c"></div>
<div class="a" style="left:341px;top:404.5px;width:15.5px;height:15.5px;border-radius:50%;background:#fff;border:1px solid #6c6c6c"></div>
<div class="a" style="left:456px;top:404.5px;width:15.5px;height:15.5px;border-radius:50%;background:#fff;border:1px solid #6c6c6c"></div>
<div class="a" style="left:571px;top:404.5px;width:15.5px;height:15.5px;border-radius:50%;background:#fff;border:1px solid #6c6c6c"></div>
<div class="a" style="left:686px;top:404.5px;width:15.5px;height:15.5px;border-radius:50%;background:#fff;border:1px solid #6c6c6c"></div>
<div class="a" style="left:341px;top:558.5px;width:15.5px;height:15.5px;border-radius:50%;background:#fff;border:1px solid #6c6c6c"></div>


<!-- cell icons -->
<svg width="0" height="0" style="position:absolute"><defs>
<g id="cic" fill="#3e424b">
<path d="M14 4 H20.1 V10.1 Z"/>
<path d="M18.3 5.4 L19.6 6.7 L14.3 12 L13 10.7 Z"/>
<path d="M4 13.6 V19.8 H10.2 Z"/>
<path d="M5.4 18.4 L4.1 17.1 L9.5 11.9 L10.8 13.2 Z"/>
<path d="M20 19.9 L21.3 14.6 L31.4 4.5 Q33 3 34.6 4.5 L35.2 5.1 Q36.8 6.7 35.2 8.3 L25.2 18.4 Z M23.4 16 L24 16.6 L31.8 8.9 L31.2 8.3 Z" fill-rule="evenodd"/>
<path d="M36.6 6.2 H51.8 V7.9 H36.6 Z M42.2 4 H46 V6.2 H45 V5 H43.2 V6.2 H42.2 Z"/>
<path d="M38.1 7.9 H50.1 L48.9 19.8 H39.3 Z M40.9 9 V18.1 H42.8 V9 Z M44.9 9 V18.1 H47.2 V9 Z" fill-rule="evenodd"/>
</g></defs></svg>
<svg class="a" style="left:392px;top:332px" width="56" height="24" viewBox="0 0 56 24"><use href="#cic"/></svg>
<svg class="a" style="left:507px;top:332px" width="56" height="24" viewBox="0 0 56 24"><use href="#cic"/></svg>
<svg class="a" style="left:622px;top:332px" width="56" height="24" viewBox="0 0 56 24"><use href="#cic"/></svg>
<svg class="a" style="left:737px;top:332px" width="56" height="24" viewBox="0 0 56 24"><use href="#cic"/></svg>
<svg class="a" style="left:392px;top:486px" width="56" height="24" viewBox="0 0 56 24"><use href="#cic"/></svg>
<svg class="a" style="left:507px;top:486px" width="56" height="24" viewBox="0 0 56 24"><use href="#cic"/></svg>
<svg class="a" style="left:622px;top:486px" width="56" height="24" viewBox="0 0 56 24"><use href="#cic"/></svg>
<svg class="a" style="left:737px;top:486px" width="56" height="24" viewBox="0 0 56 24"><use href="#cic"/></svg>
<svg class="a" style="left:392px;top:640px" width="56" height="24" viewBox="0 0 56 24"><use href="#cic"/></svg>

<!-- white inputs -->
<div class="a" style="left:339px;top:356px;width:102px;height:18px;background:#fff"></div>
<div class="a" style="left:454px;top:356px;width:102px;height:18px;background:#fff"></div>
<div class="a" style="left:569px;top:356px;width:102px;height:18px;background:#fff"></div>
<div class="a" style="left:684px;top:356px;width:102px;height:18px;background:#fff"></div>
<div class="a" style="left:339px;top:510px;width:102px;height:18px;background:#fff"></div>
<div class="a" style="left:454px;top:510px;width:102px;height:18px;background:#fff"></div>
<div class="a" style="left:569px;top:510px;width:102px;height:18px;background:#fff"></div>
<div class="a" style="left:684px;top:510px;width:102px;height:18px;background:#fff"></div>
<div class="a" style="left:339px;top:664px;width:102px;height:18px;background:#fff"></div>

<div class="t" style="left:98.6px;top:12.83px;font-size:13.2px;font-weight:normal;-webkit-text-stroke:0.32px #1f2a3c;color:#1f2a3c;letter-spacing:0.478px">Bearbeiten</div>
<div class="t" style="left:188.2px;top:12.83px;font-size:13.2px;font-weight:normal;-webkit-text-stroke:0.32px #1f2a3c;color:#1f2a3c;letter-spacing:0.085px">Extras</div>
<div class="t" style="left:246.4px;top:12.83px;font-size:13.2px;font-weight:normal;-webkit-text-stroke:0.32px #1f2a3c;color:#1f2a3c;letter-spacing:0.667px">Aktionen</div>
<div class="t" style="left:323.4px;top:12.83px;font-size:13.2px;font-weight:normal;-webkit-text-stroke:0.32px #1f2a3c;color:#1f2a3c;letter-spacing:0.516px">Statistiken</div>
<div class="t" style="left:410px;top:12.83px;font-size:13.2px;font-weight:normal;-webkit-text-stroke:0.32px #1f2a3c;color:#1f2a3c;letter-spacing:0.616px">Marketplace</div>
<div class="t" style="left:508.7px;top:12.83px;font-size:13.2px;font-weight:normal;-webkit-text-stroke:0.32px #1f2a3c;color:#1f2a3c;letter-spacing:0.527px">Hilfe</div>
<div class="t" style="left:1250.3px;top:12.00px;font-size:13px;font-weight:normal;color:#1f2a3c;letter-spacing:-0.059px">onOffice enterprise edition</div>
<div class="t" style="left:134px;top:97.21px;font-size:17px;font-weight:bold;color:#fff;letter-spacing:0.125px">Stammobjekt</div>
<div class="t" style="left:100.4px;top:288.00px;font-size:13px;font-weight:bold;color:#6a6d74;letter-spacing:0.875px">ImmoNr</div>
<div class="t" style="left:100.4px;top:306.00px;font-size:13px;font-weight:normal;color:#222;letter-spacing:-0.328px">AF437</div>
<div class="t" style="left:100.4px;top:336.00px;font-size:13px;font-weight:bold;color:#6a6d74;letter-spacing:0.122px">Preis</div>
<div class="t" style="left:100.4px;top:354.00px;font-size:13px;font-weight:normal;color:#222;letter-spacing:0.104px">355.000,00 € (Kaufpreis)</div>
<div class="t" style="left:100.4px;top:384.00px;font-size:13px;font-weight:bold;color:#6a6d74;letter-spacing:-0.119px">Adresse</div>
<div class="t" style="left:100.4px;top:402.00px;font-size:13px;font-weight:normal;color:#222;letter-spacing:0.343px">Wendelinstr. 7</div>
<div class="t" style="left:100.4px;top:420.00px;font-size:13px;font-weight:normal;color:#222;letter-spacing:-0.019px">Aachen</div>
<div class="t" style="left:100.4px;top:450.00px;font-size:13px;font-weight:bold;color:#6a6d74;letter-spacing:0.343px">Eigentümer</div>
<div class="t" style="left:100.4px;top:468.00px;font-size:13px;font-weight:normal;color:#222">3</div>
<div class="t" style="left:100.4px;top:486.00px;font-size:13px;font-weight:normal;color:#2b7cc6;letter-spacing:0.092px">Katharina Eigen</div>
<div class="t" style="left:100.4px;top:504.00px;font-size:13px;font-weight:normal;color:#222;letter-spacing:0.034px">0241 - 44686</div>
<div class="t" style="left:100.4px;top:534.00px;font-size:13px;font-weight:bold;color:#6a6d74;letter-spacing:0.562px">Käufer</div>
<div class="t" style="left:100.4px;top:552.00px;font-size:13px;font-weight:normal;color:#222;letter-spacing:0.531px">42</div>
<div class="t" style="left:100.4px;top:570.00px;font-size:13px;font-weight:normal;color:#2b7cc6;letter-spacing:0.223px">Paula Sonnestern</div>
<div class="t" style="left:100.4px;top:600.00px;font-size:13px;font-weight:bold;color:#6a6d74;letter-spacing:1.001px">Mieter</div>
<div class="t" style="left:100.4px;top:618.00px;font-size:13px;font-weight:normal;color:#222;letter-spacing:0.531px">70</div>
<div class="t" style="left:100.4px;top:636.00px;font-size:13px;font-weight:normal;color:#2b7cc6;letter-spacing:-0.194px">Jane Doe</div>
<div class="t" style="left:100.4px;top:654.00px;font-size:13px;font-weight:normal;color:#222;letter-spacing:0.135px">+49178909357641</div>
<div class="t" style="left:317.5px;top:111.76px;font-size:13.4px;font-weight:bold;color:#fff;letter-spacing:0.048px">Schöne Immobilie in Aachen</div>
<div class="t" style="left:300.3px;top:150.74px;font-size:13.3px;font-weight:normal;-webkit-text-stroke:0.32px #4a5262;color:#4a5262;letter-spacing:0.563px">Grunddaten</div>
<div class="t" style="left:400.7px;top:150.74px;font-size:13.3px;font-weight:normal;-webkit-text-stroke:0.32px #4a5262;color:#4a5262;letter-spacing:0.192px">Preise/Flächen</div>
<div class="t" style="left:516.6px;top:150.74px;font-size:13.3px;font-weight:normal;-webkit-text-stroke:0.32px #4a5262;color:#4a5262;letter-spacing:0.341px">Details</div>
<div class="t" style="left:584px;top:150.74px;font-size:13.3px;font-weight:normal;-webkit-text-stroke:0.32px #4a5262;color:#4a5262;letter-spacing:0.458px">Freitexte</div>
<div class="t" style="left:738.8px;top:150.74px;font-size:13.3px;font-weight:normal;-webkit-text-stroke:0.32px #4a5262;color:#4a5262;letter-spacing:-0.541px">OWA</div>
<div class="t" style="left:793.9px;top:150.74px;font-size:13.3px;font-weight:normal;-webkit-text-stroke:0.32px #4a5262;color:#4a5262;letter-spacing:0.431px">Einheiten</div>
<div class="t" style="left:876.9px;top:150.74px;font-size:13.3px;font-weight:normal;-webkit-text-stroke:0.32px #4a5262;color:#4a5262;letter-spacing:0.801px">Vermarktung</div>
<div class="t" style="left:984px;top:150.74px;font-size:13.3px;font-weight:normal;-webkit-text-stroke:0.32px #4a5262;color:#4a5262;letter-spacing:0.543px">Interessenten</div>
<div class="t" style="left:1095.3px;top:150.74px;font-size:13.3px;font-weight:normal;-webkit-text-stroke:0.32px #4a5262;color:#4a5262;letter-spacing:0.652px">Maklerbuch</div>
<div class="t" style="left:1194px;top:150.74px;font-size:13.3px;font-weight:normal;-webkit-text-stroke:0.32px #4a5262;color:#4a5262;letter-spacing:0.555px">Statistik</div>
<div class="t" style="left:1269px;top:150.74px;font-size:13.3px;font-weight:normal;-webkit-text-stroke:0.32px #4a5262;color:#4a5262;letter-spacing:0.468px">Faktura</div>
<div class="t" style="left:664px;top:151.32px;font-size:13.8px;font-weight:bold;color:#161c28;letter-spacing:0.159px">Dateien</div>
<div class="t" style="left:372.2px;top:215.74px;font-size:13.3px;font-weight:normal;color:#222;letter-spacing:-0.128px">Extern</div>
<div class="t" style="left:502.2px;top:215.74px;font-size:13.3px;font-weight:normal;color:#555;letter-spacing:0.337px">Intern</div>
<div class="t" style="left:98.3px;top:873.60px;font-size:13px;font-weight:normal;-webkit-text-stroke:0.32px #1f2a3c;color:#1f2a3c;letter-spacing:0.351px">E-Mail schreiben</div>
<div class="t" style="left:221.6px;top:873.60px;font-size:13px;font-weight:normal;-webkit-text-stroke:0.32px #1f2a3c;color:#1f2a3c;letter-spacing:-0.029px">Exposés</div>
<div class="t" style="left:309px;top:873.60px;font-size:13px;font-weight:normal;-webkit-text-stroke:0.32px #1f2a3c;color:#1f2a3c;letter-spacing:0.884px">Kontakt</div>
<div class="t" style="left:395.7px;top:873.60px;font-size:13px;font-weight:normal;-webkit-text-stroke:0.32px #1f2a3c;color:#1f2a3c;letter-spacing:0.464px">Anlegen</div>
<div class="t" style="left:483.6px;top:873.60px;font-size:13px;font-weight:normal;-webkit-text-stroke:0.32px #1f2a3c;color:#1f2a3c;letter-spacing:0.704px">Weitere Aktionen</div>
<div class="t" style="left:1303.3px;top:873.60px;font-size:13px;font-weight:normal;-webkit-text-stroke:0.32px #1f2a3c;color:#1f2a3c;letter-spacing:0.713px">Mehrsprachigkeit</div>
<div class="t" style="left:869.4px;top:228.50px;font-size:13px;font-weight:normal;color:#222;letter-spacing:0.188px">Datei-Art:</div>
<div class="t" style="left:869.4px;top:258.00px;font-size:13px;font-weight:normal;color:#222;letter-spacing:0.478px">Dokumentenmerkmale:</div>
<div class="t" style="left:869.4px;top:288.00px;font-size:13px;font-weight:normal;color:#222;letter-spacing:0.166px">Datei-Titel:</div>
<div class="t" style="left:869.4px;top:317.00px;font-size:13px;font-weight:normal;color:#222;letter-spacing:0.216px">Freitext:</div>
<div class="t" style="left:869.4px;top:349.50px;font-size:13px;font-weight:normal;color:#222;letter-spacing:0.126px">Datei:</div>
<div class="t" style="left:1013px;top:227.00px;font-size:13px;font-weight:normal;color:#222;letter-spacing:-0.328px">Foto (JPEG, BMP, GIF, PNG)</div>
<div class="t" style="left:1013px;top:257.00px;font-size:13px;font-weight:normal;color:#222;letter-spacing:0.206px">keine Angaben</div>
<div class="t" style="left:1013px;top:314.00px;font-size:13px;font-weight:normal;color:#a6a9ae;letter-spacing:0.146px">keine Angabe</div>
<div class="t" style="left:1129.7px;top:346.00px;font-size:13px;font-weight:normal;color:#222;letter-spacing:0.157px">Keine ausgewählt</div>
<div class="t" style="left:869px;top:432.69px;font-size:17.5px;font-weight:bold;color:#161c28;letter-spacing:0.412px">Interne Funktionen</div>
<div class="t" style="left:869px;top:689.19px;font-size:17.5px;font-weight:bold;color:#161c28;letter-spacing:0.533px">Marketplace</div>
<div class="t" style="left:877px;top:481.37px;font-size:13.5px;font-weight:bold;color:#111;letter-spacing:0.110px">mehrere Dateien hochladen</div>
<div class="t" style="left:877px;top:513.37px;font-size:13.5px;font-weight:bold;color:#aaaaaa;letter-spacing:0.097px">Dateien verteilen</div>
<div class="t" style="left:877px;top:545.37px;font-size:13.5px;font-weight:bold;color:#111;letter-spacing:-0.193px">QR-Code erstellen</div>
<div class="t" style="left:877px;top:577.37px;font-size:13.5px;font-weight:bold;color:#111;letter-spacing:-0.056px">Lageplan erstellen</div>
<div class="t" style="left:877px;top:609.37px;font-size:13.5px;font-weight:bold;color:#111;letter-spacing:-0.100px">Energieskala erstellen</div>
<div class="t" style="left:877px;top:736.57px;font-size:13.5px;font-weight:bold;color:#111;letter-spacing:-0.110px">PhotoDesigner</div>
<div class="t" style="left:877px;top:765.57px;font-size:13.5px;font-weight:bold;color:#111;letter-spacing:-0.155px">Backbone Photo</div>
<div class="t" style="left:877px;top:794.57px;font-size:13.5px;font-weight:bold;color:#111;letter-spacing:-0.056px">Planimetrie e visualizzazioni</div>
<div class="t" style="left:343.7px;top:339.92px;font-size:12.5px;font-weight:normal;color:#262c38;letter-spacing:0.424px">Titelbild</div>
<div class="t" style="left:339.5px;top:363.66px;font-size:12.8px;font-weight:normal;color:#1f2430;letter-spacing:0.479px;width:101.5px;height:10.6px;overflow:hidden">vom Park</div>
<div class="t" style="left:458.7px;top:339.92px;font-size:12.5px;font-weight:normal;color:#262c38;letter-spacing:0.161px">Foto</div>
<div class="t" style="left:454.5px;top:363.66px;font-size:12.8px;font-weight:normal;color:#1f2430;letter-spacing:0.525px;width:101.5px;height:10.6px;overflow:hidden">Treppenhaus</div>
<div class="t" style="left:573.7px;top:339.92px;font-size:12.5px;font-weight:normal;color:#262c38;letter-spacing:0.161px">Foto</div>
<div class="t" style="left:569.5px;top:363.66px;font-size:12.8px;font-weight:normal;color:#1f2430;letter-spacing:-0.042px;width:101.5px;height:10.6px;overflow:hidden">Relaxen</div>
<div class="t" style="left:688.7px;top:339.92px;font-size:12.5px;font-weight:normal;color:#262c38;letter-spacing:0.161px">Foto</div>
<div class="t" style="left:684.5px;top:363.66px;font-size:12.8px;font-weight:normal;color:#1f2430;letter-spacing:0.089px;width:101.5px;height:10.6px;overflow:hidden">Großes Bad</div>
<div class="t" style="left:343.7px;top:493.92px;font-size:12.5px;font-weight:normal;color:#262c38;letter-spacing:0.161px">Foto</div>
<div class="t" style="left:339.5px;top:517.66px;font-size:12.8px;font-weight:normal;color:#1f2430;letter-spacing:0.408px;width:101.5px;height:10.6px;overflow:hidden">Schlafzimmer</div>
<div class="t" style="left:458.7px;top:493.92px;font-size:12.5px;font-weight:normal;color:#262c38;letter-spacing:0.161px">Foto</div>
<div class="t" style="left:454.5px;top:517.66px;font-size:12.8px;font-weight:normal;color:#1f2430;letter-spacing:0.429px;width:101.5px;height:10.6px;overflow:hidden">Grundriss</div>
<div class="t" style="left:573.7px;top:493.92px;font-size:12.5px;font-weight:normal;color:#262c38;letter-spacing:0.552px">Grundriss</div>
<div class="t" style="left:569.5px;top:517.66px;font-size:12.8px;font-weight:normal;color:#1f2430;letter-spacing:0.475px;width:101.5px;height:10.6px;overflow:hidden">Grundriss (optim</div>
<div class="t" style="left:688.7px;top:493.92px;font-size:12.5px;font-weight:normal;color:#262c38">Epass_S.</div>
<div class="t" style="left:684.5px;top:517.66px;font-size:12.8px;font-weight:normal;color:#1f2430;letter-spacing:0.111px;width:101.5px;height:10.6px;overflow:hidden">Energieskala</div>
<div class="t" style="left:343.7px;top:647.92px;font-size:12.5px;font-weight:normal;color:#262c38">Epass_S.</div>
<div class="t" style="left:339.5px;top:671.66px;font-size:12.8px;font-weight:normal;color:#1f2430;letter-spacing:0.134px;width:101.5px;height:10.6px;overflow:hidden">Energieskala(1)</div>

</body></html>
